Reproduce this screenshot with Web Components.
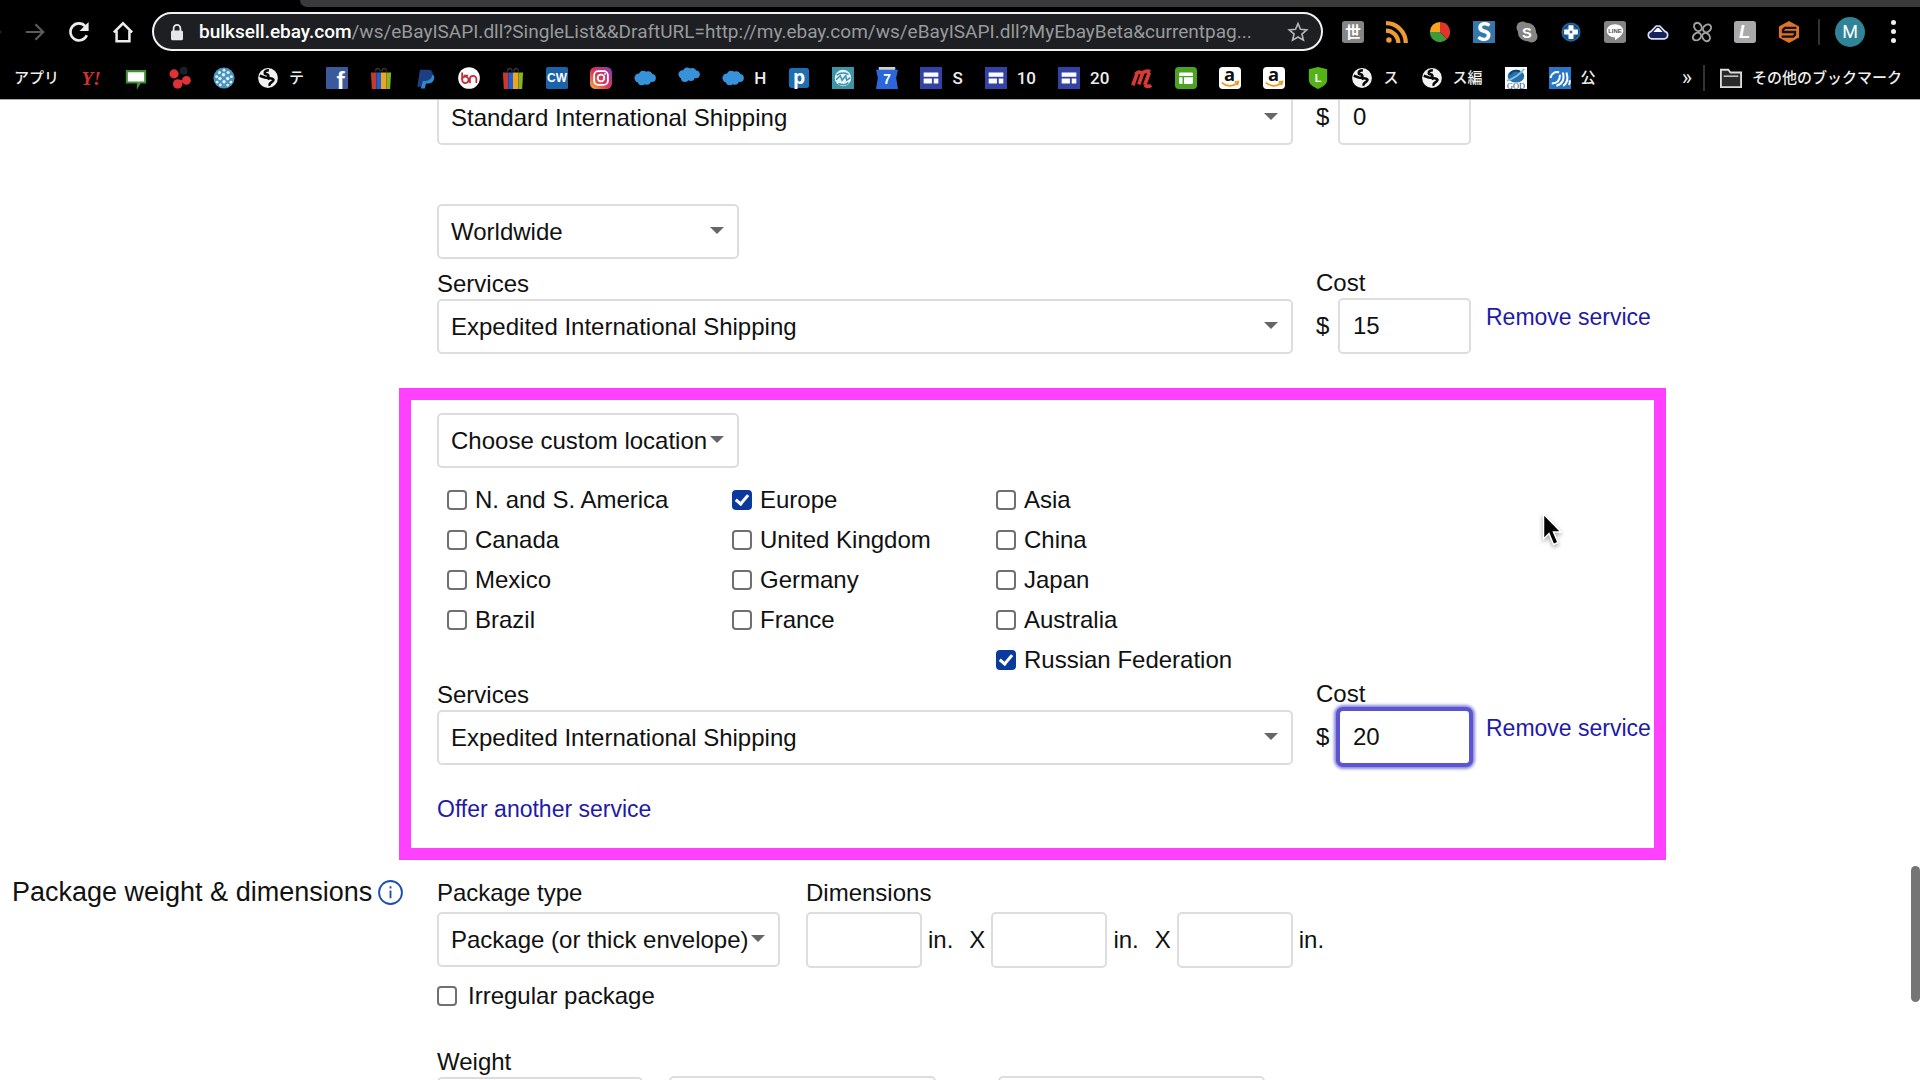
<!DOCTYPE html>
<html lang="en">
<head>
<meta charset="utf-8">
<title>Create your listing</title>
<style>
  html, body { margin: 0; height: 100%; }
  body { background: #fff; color: #111; font: 24px/30px "Liberation Sans", Arial, "Noto Sans CJK JP", sans-serif; overflow: hidden; }
</style>
</head>
<body>
<listing-window></listing-window>

<script>
const ICONS = {
  forward: '<path d="M2 12h18M12.500 3.500 21 12l-8.500 8.500" fill="none" stroke="#5c5c5c" stroke-width="2.400"/>',
  back: '<path d="M22 12H2" stroke="#eee" stroke-width="2.600"/>',
  reload: '<path d="M20.500 15.500A9.300 9.300 0 1 1 19 5.800" fill="none" stroke="#eee" stroke-width="2.800"/><path d="M22.500 1v10h-10z" fill="#eee"/>',
  home: '<path d="M2 12.500 12 2.500l10 10M5 10.500V22h14V10.500" fill="none" stroke="#eee" stroke-width="2.700"/>',
  lock: '<rect x="4" y="10" width="16" height="13" rx="2" fill="#e6e6e6"/><path d="M7.500 11V7a4.500 4.500 0 0 1 9 0v4" fill="none" stroke="#e6e6e6" stroke-width="2.400"/>',
  star: '<path d="m12 2.800 2.700 6.300 6.800.6-5.200 4.500 1.600 6.700-5.900-3.500-5.900 3.500 1.600-6.700-5.200-4.500 6.800-.6z" fill="none" stroke="#b4b4b4" stroke-width="1.800"/>',
  world: '<rect width="24" height="24" rx="3" fill="#858585"/><text x="12" y="18" text-anchor="middle" font-size="17" font-weight="700" fill="#fff" font-family="Noto Sans CJK JP">世</text>',
  rss: '<g fill="none" stroke="#ee9b33" stroke-width="4.600"><path d="M0 10.500A13.500 13.500 0 0 1 13.500 24"/><path d="M0 2.400A21.600 21.600 0 0 1 21.600 24"/></g><circle cx="3.200" cy="20.800" r="3" fill="#ee9b33"/>',
  pie: '<path d="M12 12V1A11 11 0 0 0 1 12z" fill="#f6a51e"/><path d="M12 12 1 12a11 11 0 0 0 18.500 8z" fill="#3f9a3b"/><path d="M12 12V1a11 11 0 0 1 7.500 19z" fill="#e0352b"/>',
  bigs: '<rect width="24" height="24" fill="#3478ab"/><text x="12" y="22" text-anchor="middle" font-size="28" font-weight="900" fill="#fff" font-family="Lato">S</text>',
  skype: '<circle cx="7" cy="7" r="6.500" fill="#858585"/><circle cx="17" cy="17" r="6.500" fill="#858585"/><circle cx="12" cy="12" r="10" fill="#858585"/><text x="12" y="18" text-anchor="middle" font-size="16" font-weight="700" fill="#fff" font-family="Liberation Sans">S</text>',
  plus: '<circle cx="12" cy="12" r="10.500" fill="#23649c"/><circle cx="12" cy="12" r="7.800" fill="none" stroke="#0d3a68"/><path d="M9.300 4.500h5.400v4.800h4.800v5.400h-4.800v4.800H9.300v-4.800H4.500V9.300h4.800z" fill="#fff"/><rect x="10.600" y="10.600" width="2.800" height="2.800" fill="#2b6ca4"/>',
  line: '<rect width="24" height="24" rx="3" fill="#858585"/><path d="M12 3.500c5 0 9 3 9 7.200 0 4-5 7.800-9 10.300v-3c-5 0-9-3.200-9-7.300 0-4.200 4-7.200 9-7.200z" fill="#fff"/><text x="12" y="13" text-anchor="middle" font-size="6.500" font-weight="700" fill="#555" font-family="Liberation Sans">LINE</text>',
  nimbus: '<path d="M5 19.500a4.200 4.200 0 0 1-.5-8.200L10 5.500h4l5.500 5.800a4.200 4.200 0 0 1-.5 8.200z" fill="#18225c" stroke="#d9def5" stroke-width="1.800" stroke-linejoin="round"/><path d="m7 12 4-4.500h2L17 12z" fill="#fff"/>',
  flower: '<g fill="none" stroke="#a2a2a2" stroke-width="2.100"><ellipse cx="7.500" cy="6.500" rx="3.800" ry="4.800" transform="rotate(-35 7.500 6.500)"/><ellipse cx="17.500" cy="8" rx="3.800" ry="4.800" transform="rotate(50 17.500 8)"/><ellipse cx="6.500" cy="17" rx="3.800" ry="4.800" transform="rotate(55 6.500 17)"/><ellipse cx="16.500" cy="17.500" rx="3.800" ry="4.800" transform="rotate(-35 16.500 17.500)"/></g>',
  slantl: '<rect width="24" height="24" rx="3" fill="#a9a9a9"/><text x="11.500" y="19" text-anchor="middle" font-size="20" font-weight="700" font-style="italic" fill="#fff" font-family="Liberation Sans">L</text>',
  hexs: '<path d="M12 0 23 6v12l-11 6L1 18V6z" fill="#dd7427"/><path d="M20 7.500H7.500l-2 2V12h13v3l-2 2H4" fill="none" stroke="#111" stroke-width="2.600"/>',
  yahoo: '<text x="11" y="20" text-anchor="middle" font-size="21" font-weight="700" font-style="italic" fill="#d3332f" font-family="Liberation Serif">Y!</text>',
  chat: '<path d="M2 4.500h20v12.500h-5.500l-2.500 4v-4H2z" fill="#fff" stroke="#3f8f35" stroke-width="2.200"/>',
  dots: '<g fill="#dc3338"><circle cx="5.500" cy="7.500" r="5"/><circle cx="9.500" cy="18.500" r="5.200"/><circle cx="19" cy="14.500" r="4.800"/><path d="m6 8 6 6-2 5 9-4-7-1z"/></g><circle cx="16" cy="4" r="4.300" fill="#17202e"/>',
  mesh: '<circle cx="12" cy="12" r="11.500" fill="#4d93bd"/><g fill="#d9f1f8"><circle cx="12" cy="3.500" r="1.500"/><circle cx="7" cy="6" r="1.700"/><circle cx="16.500" cy="6" r="1.700"/><circle cx="11.500" cy="8.500" r="1.900"/><circle cx="4" cy="10.500" r="1.600"/><circle cx="20" cy="10.500" r="1.600"/><circle cx="7.500" cy="12.500" r="1.900"/><circle cx="16" cy="12.500" r="1.900"/><circle cx="12" cy="16" r="1.900"/><circle cx="4.500" cy="16.500" r="1.500"/><circle cx="19.500" cy="16.500" r="1.500"/><circle cx="8" cy="19.500" r="1.500"/><circle cx="16" cy="19.700" r="1.500"/></g>',
  globe: '<circle cx="12" cy="12" r="10.800" fill="#f2f2f2"/><path d="M13 3.500c-3 0-5 1.500-4.500 3.500 1 1.500 3.500.5 4 2.500.5 1.500-1.500 2.500-4 2L3 9.500M14 20.500c-1-2 .5-3 2-4s3-2.500 1-3.500-4-1-5.500.5" fill="none" stroke="#080808" stroke-width="2.800"/>',
  fb: '<rect width="24" height="24" rx="1" fill="#3b5a9b"/><text x="16" y="24" text-anchor="middle" font-size="27" font-weight="700" fill="#fff" font-family="Liberation Sans">f</text>',
  bag: '<path d="M6 5c0-4 5-5 5 0M13 5c0-4 5-5 5 0" fill="none" stroke="#333" stroke-width="1.600"/><path d="M1 6h6v18H2z" fill="#c9382f"/><path d="M7 6h5v18H7z" fill="#1f5fd0"/><path d="M12 6h6v18h-6z" fill="#efa427"/><path d="M18 6h5l-1 18h-4z" fill="#86b521"/>',
  paypal: '<path d="M6.500 3h9c4 0 5.500 2.500 4.700 6-.8 4-3.700 6-7.700 6H9.500L8 21.500H3.500z" fill="#1c3f83"/><path d="M20.200 8c2 1.200 2.200 3 1.700 5-.7 3.500-3.300 5-6.500 5H13l-1.200 5.500H7.500L9.500 15h3c4.500 0 7-3 7.700-7z" fill="#2b8ad0"/>',
  bn: '<circle cx="12" cy="12" r="11.800" fill="#fff"/><path d="M4.500 6v8M13 17.500V12M13 13c0-4 7-4.500 7 0v4.500M6 9.500h5" fill="none" stroke="#c92833" stroke-width="1.900"/><circle cx="8" cy="14" r="3.500" fill="none" stroke="#c92833" stroke-width="1.900"/>',
  cw: '<rect width="24" height="24" rx="2" fill="#1c62a8"/><text x="12" y="16.500" text-anchor="middle" font-size="13" font-weight="700" fill="#fff" font-family="Liberation Sans">CW</text>',
  insta: '<defs><linearGradient id="ig" x1="0" y1="1" x2="1" y2="0"><stop offset="0" stop-color="#f9b23f"/><stop offset=".45" stop-color="#d93a56"/><stop offset="1" stop-color="#8a39b8"/></linearGradient></defs><rect width="24" height="24" rx="6" fill="url(#ig)"/><rect x="4.500" y="4.500" width="15" height="15" rx="4.500" fill="none" stroke="#fff" stroke-width="2"/><circle cx="12" cy="12" r="3.600" fill="none" stroke="#fff" stroke-width="2"/><circle cx="16.500" cy="7.500" r="1" fill="#fff"/>',
  cloud: '<g fill="#3892da"><circle cx="5.500" cy="12" r="5"/><circle cx="10" cy="8.500" r="4.500"/><circle cx="15.500" cy="9" r="4.500"/><circle cx="19.500" cy="12" r="4.300"/><circle cx="14" cy="15" r="4.300"/><circle cx="8.500" cy="15.500" r="4.300"/></g>',
  cloudup: '<g fill="#3892da"><circle cx="5" cy="8" r="4.500"/><circle cx="10" cy="5" r="4.500"/><circle cx="15.500" cy="5.500" r="4.500"/><circle cx="19.500" cy="8" r="4.300"/><circle cx="14" cy="11" r="4.300"/><circle cx="7.500" cy="12" r="4.300"/></g>',
  pblue: '<rect x="1" y="1" width="22" height="22" rx="3" fill="#1f6db3"/><text x="12" y="18" text-anchor="middle" font-size="21" font-weight="700" fill="#fff" font-family="Open Sans">p</text>',
  teal: '<rect width="24" height="24" fill="#3f93a6"/><circle cx="12" cy="12" r="9" fill="#e3f3f6"/><path d="M5 9c4-3 9-3 13-1M4.500 14 9 9.500l2 5 4-5 1 5 4-3M7 18c4 2 8 1.500 11-1" fill="none" stroke="#3f93a6" stroke-width="1.600"/>',
  cal: '<path d="M3 0h18v4H3z" fill="#cfcfcf"/><path d="M0 3h24l-2 9 2 12H0l2-12z" fill="#2b66dd"/><text x="12" y="19" text-anchor="middle" font-size="15" font-weight="700" fill="#fff" font-family="Liberation Sans">7</text>',
  site: '<rect width="24" height="24" fill="#3342a5"/><path d="M4 6h16v4.500H4zM4 12.500h9V18H4zM15 12.500h5V18h-5z" fill="#fff"/>',
  mred: '<path d="M2 20 7 6M8.500 19 13 6M15 19.500 20 6M5 8c2-3 5-3 7-1 3-3 6-3 9-2M15 19.500c2 2 5 2 7 .5" fill="none" stroke="#d83a34" stroke-width="4"/>',
  gsheet: '<rect width="24" height="24" rx="4" fill="#4ca321"/><rect x="4.500" y="6" width="15" height="12.500" rx="1" fill="#fff"/><path d="M4.500 10.500h15M9 10.500v8" stroke="#4ca321" stroke-width="1.600"/>',
  amazon: '<rect width="24" height="24" rx="4" fill="#fff"/><text x="11.500" y="15" text-anchor="middle" font-size="20" font-weight="700" fill="#111" font-family="Open Sans">a</text><path d="M3 17c5 4.500 12 4.500 16.500 1M17 16.500l4-.5-1 4" fill="none" stroke="#ef9827" stroke-width="2"/>',
  shield: '<path d="M2 2.500 12 0l10 2.500V14c0 5-5 8-10 10C7 22 2 19 2 14z" fill="#55b317"/><text x="12" y="16" text-anchor="middle" font-size="12" font-weight="700" fill="#fff" font-family="Liberation Sans">L</text>',
  god: '<rect width="24" height="24" fill="#fff"/><ellipse cx="12" cy="10" rx="9" ry="7" fill="#276fa8"/><path d="M2 15C8 13 16 8 21 2" fill="none" stroke="#7fc0e4" stroke-width="2"/><path d="M5 8c3-4 8-5 11-3" stroke="#0e3f70" stroke-width="2" fill="none"/><text x="12" y="23.500" text-anchor="middle" font-size="9" fill="#1c4a86" font-family="Liberation Serif">GOD</text>',
  waves: '<rect width="24" height="24" fill="#2877c7"/><path d="M1.500 12C3 6 8 4.500 11 6M3 18c6 0 9-3.500 9-9.500M8 20.500c6-1.500 9.500-7 7-14.500M15.500 20.500c4.500-3 5.500-8.500 3.500-14.500M21.500 19.500c1.300-1.500 1.500-3 1-5" fill="none" stroke="#fff" stroke-width="2.200"/>',
  folder: '<path d="M1 3h8l2.500 3H23v16H1z" fill="#2a2a2a" stroke="#ddd" stroke-width="2"/><path d="M4 10h16" stroke="#ddd" stroke-width="1.500"/>',
  info: '<circle cx="12" cy="12" r="11" fill="none" stroke="#1e4fae" stroke-width="1.800"/><path d="M12 10v7.500M12 6v2.200" stroke="#1e4fae" stroke-width="1.800"/>'
};

const define = (name, render) => customElements.define(name, class extends HTMLElement {
  constructor() { super(); this.attachShadow({ mode: 'open' }); }
  connectedCallback() {
    this.shadowRoot.innerHTML = '<style>*{box-sizing:border-box}:host([hidden]){display:none}</style>' + render(this);
  }
});
const attr = (el, n, d = '') => el.getAttribute(n) ?? d;

define('glyph-icon', el => `
  <style>:host{display:block;flex:none;width:22px;height:22px}svg{display:block;width:100%;height:100%;overflow:visible}</style>
  <svg viewBox="0 0 24 24" aria-hidden="true">${ICONS[attr(el, 'name')]}</svg>`);

define('tool-button', el => `
  <style>:host{display:block;flex:none}button{display:block;border:0;padding:0;margin:0;background:none}</style>
  <button type="button" aria-label="${attr(el, 'label')}"><glyph-icon name="${attr(el, 'icon')}"></glyph-icon></button>`);

define('bookmark-link', el => `
  <style>
    :host{display:block;flex:none}
    a{display:flex;align-items:center;gap:10px;color:#eee;text-decoration:none;font:500 15px/22px Roboto,"Noto Sans CJK JP",sans-serif;white-space:nowrap}
    :host([latin]) a{font-size:17px}
  </style>
  <a href="#" aria-label="${attr(el, 'label', 'Bookmark')}">${attr(el, 'icon') ? `<glyph-icon name="${attr(el, 'icon')}"></glyph-icon>` : ''}<slot></slot></a>`);

define('browser-header', () => `
  <style>
    :host{display:block;background:#000;border-bottom:1px solid #aaa;color:#eee}
    .tabs{height:7px;margin-left:300px;background:#3a3a3a;border-bottom-left-radius:8px}
    .tools{display:flex;align-items:center;height:49px;padding-right:24px}
    .nav{display:flex;gap:22px;width:152px;margin-left:-20px;flex:none}
    .bar{display:flex;align-items:center;flex:1;min-width:0;height:39px;border:2px solid #f2f2f2;border-radius:20px;background:#1d1f22;padding:0 12px 0 13px;margin-left:20px}
    .lock{width:20px;height:18px}
    .url{flex:1;min-width:0;margin-left:12px;overflow:hidden;white-space:nowrap;font:19px/28px Roboto,sans-serif;color:#989a9d;outline:0}
    .url b{font-weight:500;color:#fff}
    .ext{display:flex;justify-content:space-between;width:458px;margin-left:19px;flex:none}
    .sep{width:2px;height:26px;background:#333;flex:none}
    .tools .sep{margin:0 15px 0 18px}
    .me{width:30px;height:30px;border:0;border-radius:50%;padding:0;background:#2f8597;color:#fff;font:18px/30px Roboto,sans-serif}
    .more{display:flex;flex-direction:column;gap:4px;border:0;background:none;padding:0;margin-left:26px;width:5px}
    .more i{width:5px;height:5px;border-radius:50%;background:#eee}
    .marks{display:flex;align-items:center;height:43px;padding:0 18px 0 14px}
    .list{flex:1;display:flex;justify-content:space-between}
    .over{border:0;background:none;color:#eee;padding:0;margin:0 11px 0 86px;font:22px/26px Roboto,sans-serif}
    .marks .sep{margin-right:15px}
  </style>
  <div class="tabs"></div>
  <div class="tools">
    <nav class="nav">
      <tool-button icon="back" label="Back"></tool-button>
      <tool-button icon="forward" label="Forward"></tool-button>
      <tool-button icon="reload" label="Reload"></tool-button>
      <tool-button icon="home" label="Home"></tool-button>
    </nav>
    <div class="bar">
      <glyph-icon class="lock" name="lock"></glyph-icon>
      <div class="url" role="textbox" contenteditable="true" spellcheck="false" aria-label="Address"><b>bulksell.ebay.com</b>/ws/eBayISAPI.dll?SingleList&amp;&amp;DraftURL=http://my.ebay.com/ws/eBayISAPI.dll?MyEbayBeta&amp;currentpag...</div>
      <tool-button icon="star" label="Bookmark this page"></tool-button>
    </div>
    <div class="ext">
      ${['world', 'rss', 'pie', 'bigs', 'skype', 'plus', 'line', 'nimbus', 'flower', 'slantl', 'hexs'].map(n => `<tool-button icon="${n}" label="Extension"></tool-button>`).join('')}
    </div>
    <span class="sep"></span>
    <button class="me" type="button">M</button>
    <button class="more" type="button" aria-label="Menu"><i></i><i></i><i></i></button>
  </div>
  <div class="marks">
    <div class="list">
      ${[['', 'アプリ'], ['yahoo'], ['chat'], ['dots'], ['mesh'], ['globe', 'テ'], ['fb'], ['bag'], ['paypal'], ['bn'], ['bag'], ['cw'], ['insta'], ['cloud'], ['cloudup'], ['cloud', 'H'], ['pblue'], ['teal'], ['cal'], ['site', 'S'], ['site', '10'], ['site', '20'], ['mred'], ['gsheet'], ['amazon'], ['amazon'], ['shield'], ['globe', 'ス'], ['globe', 'ス編'], ['god'], ['waves', '公']]
        .map(([i, t = '']) => `<bookmark-link icon="${i}" label="${t || i}" ${/[A-Z0-9]/.test(t) ? 'latin' : ''}>${t}</bookmark-link>`).join('')}
    </div>
    <button class="over" type="button" aria-label="More bookmarks">»</button>
    <span class="sep"></span>
    <bookmark-link icon="folder" label="その他のブックマーク">その他のブックマーク</bookmark-link>
  </div>`);

define('select-field', el => `
  <style>
    :host{display:block}
    label{display:block;margin-bottom:var(--label-gap,0px)}
    .box{display:grid;align-items:center}
    select{grid-area:1/1;width:100%;height:55px;appearance:none;border:2px solid #ddd;border-radius:5px;background:#fff;color:inherit;font:inherit;padding:0 24px 0 12px;margin:0}
    .box::after{content:"";grid-area:1/1;justify-self:end;margin:0 15px 2px 0;border:7px solid transparent;border-top-color:#666;border-bottom:0;pointer-events:none}
  </style>
  ${attr(el, 'label') ? `<label for="s">${attr(el, 'label')}</label>` : ''}
  <div class="box"><select id="s" aria-label="${attr(el, 'label') || attr(el, 'hint')}"><option>${attr(el, 'value')}</option></select></div>`);

define('text-field', el => `
  <style>
    :host{display:block}
    label{display:block}
    .row{display:flex;align-items:center}
    span{flex:none;width:22px}
    input{flex:1;min-width:0;width:100%;height:56px;border:2px solid #ddd;border-radius:5px;background:#fff;color:inherit;font:inherit;padding:0 13px;margin:0;outline:0}
    :host([active]) input{border-color:#5b55cf;box-shadow:0 0 0 2px #5b55cf,0 0 3px 4px #8b87e0}
  </style>
  ${attr(el, 'label') ? `<label for="i">${attr(el, 'label')}</label>` : ''}
  <div class="row">${attr(el, 'prefix') ? `<span>${attr(el, 'prefix')}</span>` : ''}<input id="i" type="text" value="${attr(el, 'value')}" aria-label="${attr(el, 'label') || attr(el, 'hint')}"></div>`);

define('check-field', el => `
  <style>
    :host{display:block}
    label{display:flex;align-items:center;gap:var(--check-gap,8px);white-space:nowrap}
    input{appearance:none;flex:none;display:grid;place-items:center;width:20px;height:20px;margin:0;border:2px solid #707070;border-radius:4px;background:#fff}
    input:checked{background:#0a3a9c;border-color:#0a3a9c}
    input:checked::after{content:"";width:5px;height:10px;border:solid #fff;border-width:0 3px 3px 0;transform:rotate(40deg);margin-bottom:3px}
  </style>
  <label><input type="checkbox" ${el.hasAttribute('checked') ? 'checked' : ''}><slot></slot></label>`);

define('text-link', () => `
  <style>:host{display:block;font-size:23px}a{color:#1f1aa8;text-decoration:none;white-space:nowrap}</style>
  <a href="#"><slot></slot></a>`);

define('service-row', el => `
  <style>
    :host{display:flex;align-items:flex-end}
    select-field{flex:1;min-width:0}
    text-field{width:155px;margin-left:23px}
    .end{width:168px;margin:0 0 22px 15px}
  </style>
  <select-field label="${attr(el, 'label')}" hint="Service" value="${attr(el, 'service')}"></select-field>
  <text-field label="${attr(el, 'label') && 'Cost'}" hint="Cost" prefix="$" value="${attr(el, 'cost')}" ${el.hasAttribute('active') ? 'active' : ''}></text-field>
  <div class="end">${el.hasAttribute('removable') ? '<text-link>Remove service</text-link>' : ''}</div>`);

define('location-picker', () => `
  <style>
    :host{display:grid;grid-template-columns:285px 264px auto;justify-content:start;align-items:start;padding-left:10px}
    .col{display:grid;grid-auto-rows:40px;align-items:center}
  </style>
  <div class="col"><check-field>N. and S. America</check-field><check-field>Canada</check-field><check-field>Mexico</check-field><check-field>Brazil</check-field></div>
  <div class="col"><check-field checked>Europe</check-field><check-field>United Kingdom</check-field><check-field>Germany</check-field><check-field>France</check-field></div>
  <div class="col"><check-field>Asia</check-field><check-field>China</check-field><check-field>Japan</check-field><check-field>Australia</check-field><check-field checked>Russian Federation</check-field></div>`);

define('highlight-frame', () => `
  <style>:host{display:block;border:12px solid #ff40ff;margin:34px -12px 0 -38px;padding:13px 0 24px 26px}</style>
  <slot></slot>`);

define('package-form', () => `
  <style>
    :host{display:grid;grid-template-columns:425px minmax(0,1fr);margin-top:18px;--label-gap:4px}
    h2{display:flex;align-items:center;gap:6px;margin:0;font-size:27px;line-height:28px;font-weight:400;white-space:nowrap;align-self:start}
    h2 glyph-icon{width:25px;height:25px}
    .top,.weights{display:flex}
    .type{width:343px}
    fieldset{border:0;margin:0 0 0 26px;padding:0;min-width:0}
    legend{padding:0;margin-bottom:4px}
    .dims{display:flex;align-items:center;gap:6px}
    .dims text-field{width:116px}
    .x{margin-left:10px}
    check-field{--check-gap:11px;margin:13px 0 36px}
    .weights{align-items:flex-end}
    .weights select-field{width:206px;--label-gap:0px}
    .weights text-field{width:267px;margin-left:26px}
    .weights text-field + text-field{margin-left:62px}
  </style>
  <h2>Package weight &amp; dimensions <glyph-icon name="info"></glyph-icon></h2>
  <div>
    <div class="top">
      <select-field class="type" label="Package type" value="Package (or thick envelope)"></select-field>
      <fieldset>
        <legend>Dimensions</legend>
        <div class="dims">
          <text-field hint="Length"></text-field><span>in.</span><span class="x">X</span>
          <text-field hint="Width"></text-field><span>in.</span><span class="x">X</span>
          <text-field hint="Height"></text-field><span>in.</span>
        </div>
      </fieldset>
    </div>
    <check-field>Irregular package</check-field>
    <div class="weights">
      <select-field label="Weight" value=""></select-field>
      <text-field hint="Pounds"></text-field>
      <text-field hint="Ounces"></text-field>
    </div>
  </div>`);

define('listing-window', () => `
  <style>
    :host{display:flex;flex-direction:column;height:100vh}
    main{flex:1;min-height:0;overflow:hidden;position:relative;padding-left:12px}
    .shipping{margin:0 266px 0 425px}
    .first{margin-top:-11px}
    .region{width:302px;margin-top:59px}
    .region + service-row{margin-top:9px}
    highlight-frame .region{margin-top:0}
    location-picker{margin:12px 0 -1px}
    .offer{margin-top:29px}
    .thumb{position:absolute;right:0;top:766px;width:9px;height:136px;border-radius:5px;background:#757575}
    .pointer{position:absolute;left:1542px;top:413px;width:20px;height:34px;filter:drop-shadow(0 2px 2px rgba(0,0,0,.35))}
  </style>
  <browser-header></browser-header>
  <main>
    <div class="shipping">
      <service-row class="first" service="Standard International Shipping" cost="0"></service-row>
      <select-field class="region" hint="Ship to" value="Worldwide"></select-field>
      <service-row label="Services" service="Expedited International Shipping" cost="15" removable></service-row>
      <highlight-frame>
        <select-field class="region" hint="Ship to" value="Choose custom location"></select-field>
        <location-picker></location-picker>
        <service-row label="Services" service="Expedited International Shipping" cost="20" removable active></service-row>
        <text-link class="offer">Offer another service</text-link>
      </highlight-frame>
    </div>
    <package-form></package-form>
    <span class="thumb"></span>
    <svg class="pointer" viewBox="0 0 20 34" aria-hidden="true"><path d="M1.500 1v25l5.500-5.500 4.500 11 4.500-2-4.500-10.500h7.500z" fill="#000" stroke="#fff" stroke-width="1.500"/></svg>
  </main>`);
</script>
</body>
</html>
